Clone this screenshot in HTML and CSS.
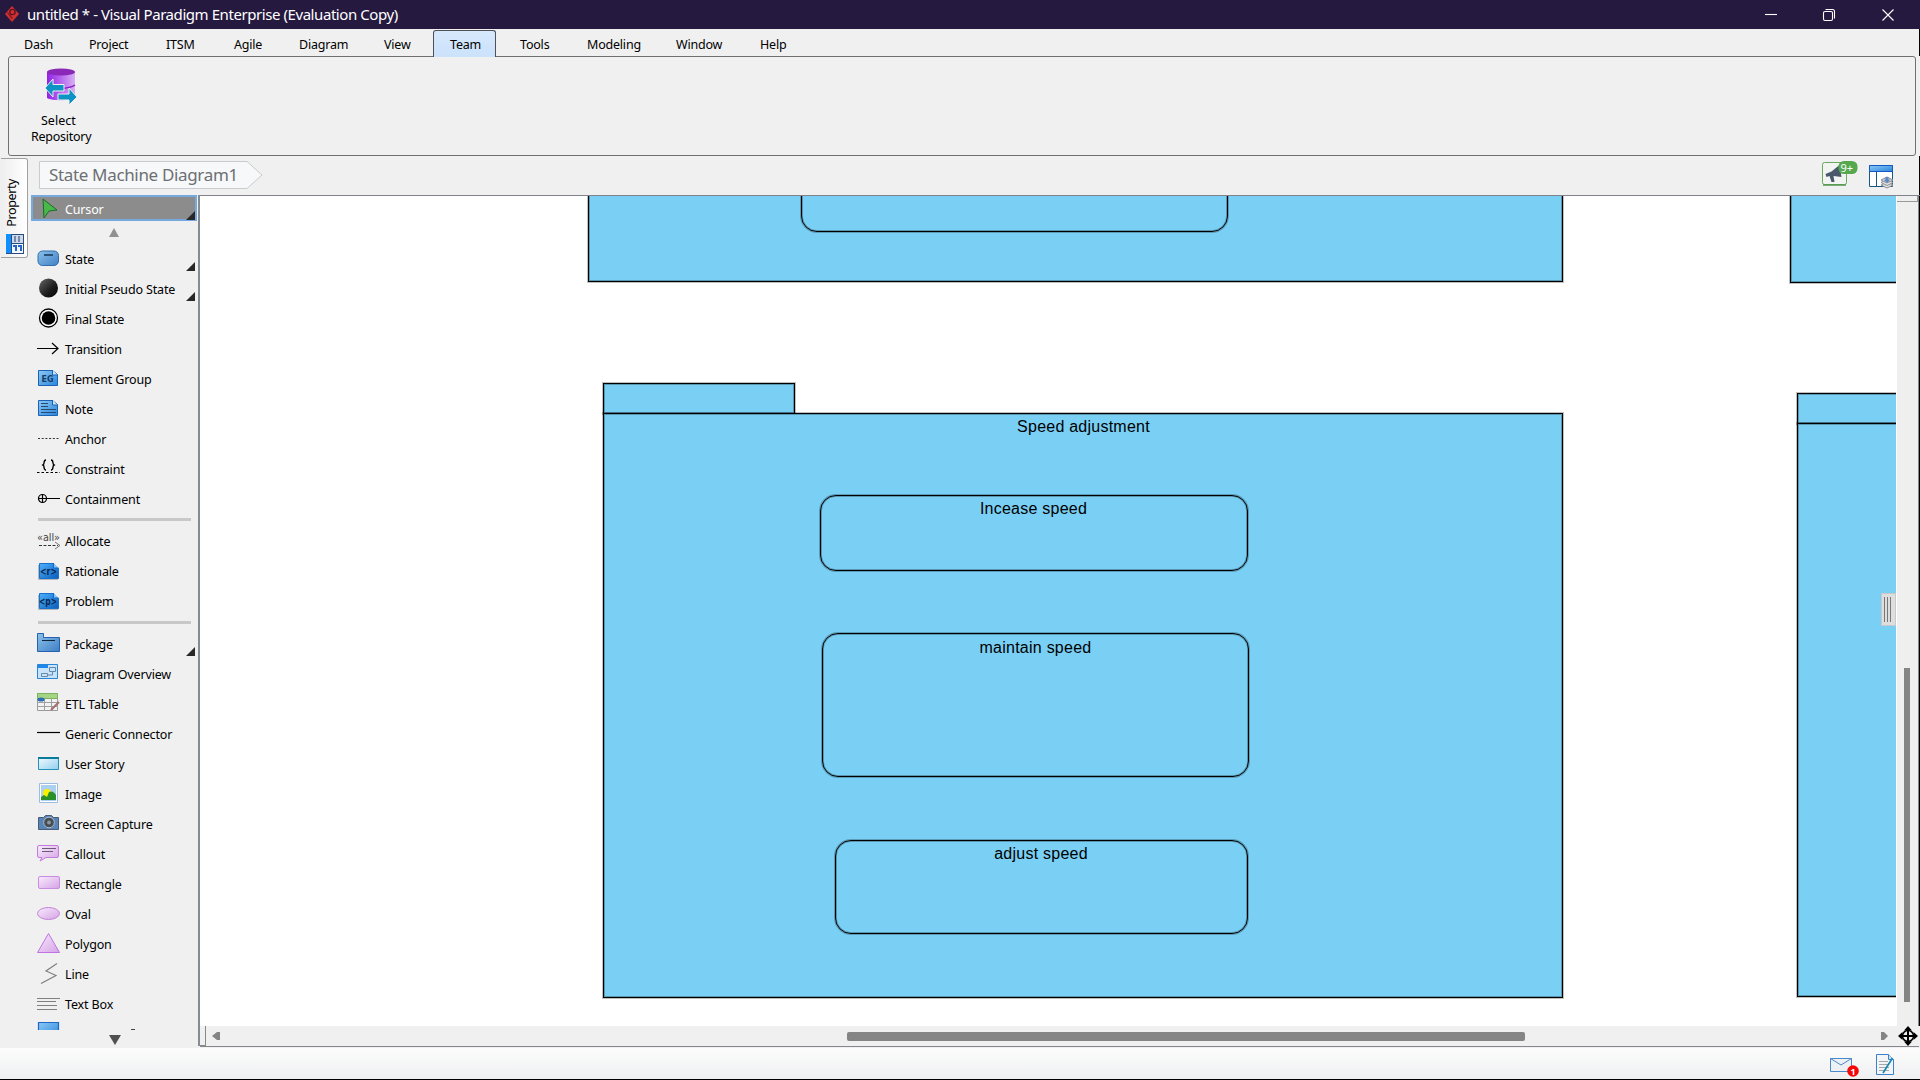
FILE: index.html
```html
<!DOCTYPE html>
<html lang="en">
<head>
<meta charset="utf-8">
<title>untitled * - Visual Paradigm Enterprise (Evaluation Copy)</title>
<link rel="stylesheet" href="styles.css">
</head>
<body>
<svg class="defs" width="0" height="0" aria-hidden="true">
  <defs>
    <linearGradient id="blue" x1="0" y1="0" x2="1" y2="1"><stop offset="0" stop-color="#8cc8f4"/><stop offset="1" stop-color="#2a86dc"/></linearGradient>
    <linearGradient id="steel" x1="0" y1="0" x2="1" y2="1"><stop offset="0" stop-color="#8cc2ea"/><stop offset="1" stop-color="#3f7fc4"/></linearGradient>
    <linearGradient id="deep" x1="0" y1="0" x2="1" y2="1"><stop offset="0" stop-color="#4cb0ff"/><stop offset="1" stop-color="#0a5cb8"/></linearGradient>
    <linearGradient id="pink" x1="0" y1="0" x2="1" y2="1"><stop offset="0" stop-color="#f8ecfc"/><stop offset="1" stop-color="#d6a2e6"/></linearGradient>
    <linearGradient id="pale" x1="0" y1="0" x2="1" y2="1"><stop offset="0" stop-color="#f2fafe"/><stop offset="1" stop-color="#8fd0f0"/></linearGradient>
    <linearGradient id="purple"><stop offset="0" stop-color="#9420e8"/><stop offset="1" stop-color="#d8b0f4"/></linearGradient>
    <linearGradient id="ball" x1="0" y1="0" x2="1" y2="1"><stop offset="0" stop-color="#666"/><stop offset=".6" stop-color="#1c1c1c"/><stop offset="1" stop-color="#000"/></linearGradient>
  </defs>
</svg>
<div class="window">
  <header class="titlebar">
    <svg class="logo" width="14" height="18" viewBox="0 0 14 18"><path d="M7 1l7 8-7 8-7-8z" fill="#d0312f"/><circle cx="7.500" cy="7" r="2.600" fill="none" stroke="#5d1426" stroke-width="1.400"/><path d="M2.500 7.500l3 4v-3M5.500 11.500l2 2" fill="none" stroke="#7a1a28" stroke-width="1.200"/></svg>
    <h1 class="title">untitled * - Visual Paradigm Enterprise (Evaluation Copy)</h1>
    <svg class="winbtns" width="136" height="28" viewBox="0 0 136 28" fill="none" stroke="#fff" stroke-width="1.100"><path d="M9 13.500h12"/><rect x="67.500" y="10.500" width="9" height="9" rx="1.500"/><path d="M69.500 8.500h7a2 2 0 0 1 2 2v7"/><path d="M126.500 8.500l11 11M137.500 8.500l-11 11"/></svg>
  </header>
  <nav class="menu">
    <span class="item dash">Dash</span><span class="item project">Project</span><span class="item itsm">ITSM</span><span class="item agile">Agile</span><span class="item diagram">Diagram</span><span class="item view">View</span><span class="item team">Team</span><span class="item tools">Tools</span><span class="item modeling">Modeling</span><span class="item windowm">Window</span><span class="item help">Help</span>
  </nav>
  <section class="ribbon">
    <button class="repo">
      <svg width="34" height="40" viewBox="0 0 34 40"><path d="M3 5v26c4 3 24 3 28 0V5z" fill="url(#purple)"/><ellipse cx="17" cy="5" rx="14" ry="3.500" fill="#8a28b8"/><path d="M3 20c5 3 22 2 28-2" fill="none" stroke="#8c1cc8" stroke-width="1.500"/><path d="M1 21l8-9v5.500h11v6.500H9v6z" fill="#0f93c4" stroke="#f0f0f0"/><path d="M33 30l-8 8v-5H14v-6h11v-6z" fill="#0f93c4" stroke="#f0f0f0"/></svg>
      <span class="repo-a">Select</span><span class="repo-b">Repository</span>
    </button>
  </section>
  <div class="body">
    <aside class="dock">
      <div class="proptab">
        <span class="vert">Property</span>
        <svg width="19" height="21" viewBox="0 0 19 21"><path d="M0 1h18v20H0z" fill="#2c4c7c"/><path d="M0 1h5v19H0z" fill="#1090ff"/><path d="M6 2h11v8H6z" fill="#cdd9ea"/><path d="M6 11h11v9H6z" fill="#f2f6fc"/><path d="M9 3v6m4-6v6" stroke="#7888a8" stroke-width="2"/><path d="M7 13h3v5m2-5h3v5" fill="none" stroke="#2464c4" stroke-width="2"/></svg>
      </div>
    </aside>
    <main class="main">
      <div class="crumbs">
        <div class="crumb">
          <svg width="224" height="28" viewBox="0 0 224 28"><path d="M.5.500h207.500l15 13.500-15 13.500H.5z" fill="#f7f8f9" stroke="#c9cbce"/></svg>
          <span class="crumb-text">State Machine Diagram1</span>
        </div>
        <div class="tools-r">
          <svg width="38" height="30" viewBox="0 -2 38 30"><rect x="1.500" y="1.500" width="24" height="22" rx="2" fill="#f2f4f2" stroke="#6aa860"/><path d="M2 24h23" stroke="#54984c" stroke-width="1.500"/><path d="M4.500 13l6-2.500 8-6.500 2 12-8-1 1 6h-3l-2-6-3 1z" fill="#4a586c"/><rect x="17.500" y="0" width="19" height="13" rx="5.500" fill="#56a84e"/><text x="19.500" y="10.500" class="badge">9+</text></svg>
          <svg width="28" height="30" viewBox="0 -2 28 30"><path d="M1.500 4.500h23v21h-23z" fill="#fff" stroke="#155a80"/><path d="M8.500 11v14" stroke="#155a80"/><path d="M1.500 4.500h23v6h-23z" fill="url(#blue)" stroke="#1458c8"/><g fill="#e4e4e6" stroke="#8a8c90"><path d="M13 24l6-3 6 3-6 3z"/><path d="M13 21.500l6-3 6 3-6 3z"/><path d="M13 19l6-3 6 3-6 3z"/></g><path d="M17.500 16h3v2.500h2L19 22l-3.500-3.500h2z" fill="#5d88c8"/></svg>
        </div>
      </div>
      <div class="work">
        <div class="palette">
          <div class="row cursor"><svg class="ic" viewBox="0 0 24 24"><path d="M6 3l14 11-8 1-5 7z" fill="#48b848" stroke="#1e6a2c"/></svg><span>Cursor</span><i class="corner"></i></div>
          <div class="scroll-up"><svg width="10" height="9"><path d="M5 0l5 9H0z" fill="#909090"/></svg></div>
          <div class="row"><svg class="ic" viewBox="0 0 24 24"><rect x="1" y="4" width="20.500" height="14.500" rx="4.500" fill="url(#steel)" stroke="#2e6eae"/><path d="M7 8h9" stroke="#24486c" stroke-width="1.800"/></svg><span>State</span><i class="corner"></i></div>
          <div class="row"><svg class="ic" viewBox="0 0 24 24"><circle cx="11.500" cy="11" r="9.500" fill="url(#ball)"/></svg><span>Initial Pseudo State</span><i class="corner"></i></div>
          <div class="row"><svg class="ic" viewBox="0 0 24 24"><circle cx="11.500" cy="11" r="9" fill="#fff" stroke="#000" stroke-width="1.300"/><circle cx="11.500" cy="11" r="6.800"/></svg><span>Final State</span></div>
          <div class="row"><svg class="ic" viewBox="0 0 24 24" fill="none" stroke="#000" stroke-width="1.200"><path d="M0 11.500h21M15 6l6 5.500-6 5.500"/></svg><span>Transition</span></div>
          <div class="row"><svg class="ic" viewBox="0 0 24 24"><path d="M1.500 3.500h14l5 4v11h-19z" fill="url(#blue)" stroke="#1a62b4"/><path d="M15.500 3v5h5" fill="#cfe6fa" stroke="#1a62b4"/><text x="4.500" y="15" class="eg">EG</text></svg><span>Element Group</span></div>
          <div class="row"><svg class="ic" viewBox="0 0 24 24"><path d="M1.500 3.500h14l5 4v11h-19z" fill="url(#blue)" stroke="#1a62b4"/><path d="M15.500 3v5h5" fill="#cfe6fa" stroke="#1a62b4"/><path d="M4 6.500h7M4 9.500h7M4 12.500h15M4 15.500h15" stroke="#244a74"/></svg><span>Note</span></div>
          <div class="row"><svg class="ic" viewBox="0 0 24 24"><path d="M1 11.500h21" stroke="#333" stroke-dasharray="2 1.700"/></svg><span>Anchor</span></div>
          <div class="row"><svg class="ic" viewBox="0 0 24 24" fill="none" stroke="#000"><path d="M0 15.500h23" stroke-dasharray="2.500 2"/><path d="M9 3c-3 0-1 4-3 5 2 1 0 5 3 5M14 3c3 0 1 4 3 5-2 1 0 5-3 5" stroke-width="1.400"/></svg><span>Constraint</span></div>
          <div class="row"><svg class="ic" viewBox="0 0 24 24" fill="none" stroke="#000" stroke-width="1.200"><circle cx="5.500" cy="11.500" r="4"/><path d="M1 11.500h22M5.500 7v9"/></svg><span>Containment</span></div>
          <hr class="sep">
          <div class="row"><svg class="ic" viewBox="0 0 24 24"><text x="0" y="11" class="alloc" textLength="23" lengthAdjust="spacingAndGlyphs">«all»</text><path d="M2 15.500h19" fill="none" stroke="#333" stroke-dasharray="3 1.500"/><path d="M18 12l5 3.500-5 3.500" fill="none" stroke="#777"/></svg><span>Allocate</span></div>
          <div class="row"><svg class="ic" viewBox="0 0 24 24"><path d="M2.500 3.500h14l5 5v10h-19z" fill="url(#deep)" stroke="#1670cc"/><path d="M1.500 5v14.500H21" fill="none" stroke="#b8b8b8"/><path d="M16.500 3v5h5" fill="#8cc8fa" stroke="#1068c8"/><text x="3" y="14.500" class="tag" textLength="17" lengthAdjust="spacingAndGlyphs">&lt;r&gt;</text></svg><span>Rationale</span></div>
          <div class="row"><svg class="ic" viewBox="0 0 24 24"><path d="M2.500 3.500h14l5 5v10h-19z" fill="url(#deep)" stroke="#1670cc"/><path d="M1.500 5v14.500H21" fill="none" stroke="#b8b8b8"/><path d="M16.500 3v5h5" fill="#8cc8fa" stroke="#1068c8"/><text x="2" y="14.500" class="tag" textLength="18" lengthAdjust="spacingAndGlyphs">&lt;p&gt;</text></svg><span>Problem</span></div>
          <hr class="sep sep-b">
          <div class="row"><svg class="ic" viewBox="0 0 24 24"><path d="M.5 .5h6v4h16v14H.5z" fill="url(#steel)" stroke="#2462b0"/><path d="M5 7.500h13" stroke="#10243c"/></svg><span>Package</span><i class="corner"></i></div>
          <div class="row"><svg class="ic" viewBox="0 0 24 24"><path d="M.5 1.500h20v14H.5z" fill="#c8e4fa" stroke="#2a84d8"/><path d="M1 2h10v3H1z" fill="#1c88ec"/><path d="M12.500 4.500h6v4h-6zM4.500 10.500h6v3h-6zM10.500 12h5V8.500" fill="none" stroke="#6888a8"/></svg><span>Diagram Overview</span></div>
          <div class="row"><svg class="ic" viewBox="0 0 24 24"><path d="M.5 .5h20v17H.5z" fill="#f2f2f2" stroke="#9a9a9a"/><path d="M.5 .5h20v5H.5z" fill="#a4d484" stroke="#7cb45c"/><path d="M0 9.500h21M0 13.500h21M7.500 6v12M14.500 6v12" stroke="#a0a0a0"/><ellipse cx="4" cy="6.500" rx="3.500" ry="2" fill="#2c6cb0"/><path d="M14 17l8-8" stroke="#a46e6e" stroke-width="2"/></svg><span>ETL Table</span></div>
          <div class="row"><svg class="ic" viewBox="0 0 24 24"><path d="M0 9.500h23" stroke="#000" stroke-width="1.200"/></svg><span>Generic Connector</span></div>
          <div class="row"><svg class="ic" viewBox="0 0 24 24"><path d="M1.500 4.500h20v12h-20z" fill="url(#pale)" stroke="#2690b8"/><path d="M1 4h21v2H1z" fill="#087c98"/></svg><span>User Story</span></div>
          <div class="row"><svg class="ic" viewBox="0 0 24 24"><path d="M2.500 .5h18v19h-18z" fill="#fff" stroke="#9cbce0"/><path d="M4 2h15v16H4z" fill="#acd0f0"/><circle cx="10" cy="10" r="4" fill="#f8f000"/><path d="M4 17v-3l3-2 3 2 2-5q4-2 7 3v5z" fill="#2a9028"/></svg><span>Image</span></div>
          <div class="row"><svg class="ic" viewBox="0 0 24 24"><path d="M1.500 4.500h5l2-2h6l2 2h5v12h-20z" fill="#5884b8" stroke="#465c74"/><circle cx="12" cy="9.500" r="5.300" fill="#444c54" stroke="#b4bcc4"/><circle cx="12" cy="9.500" r="2" fill="#8c949c"/></svg><span>Screen Capture</span></div>
          <div class="row"><svg class="ic" viewBox="0 0 24 24"><path d="M2 2.500h18q1.500 0 1.500 1.500v9q0 1.500-1.500 1.500H9L3 18l2-3.500H2q-1.500 0-1.500-1.500V4q0-1.500 1.500-1.500z" fill="url(#pink)" stroke="#c47cdc"/><path d="M5 5.500h14M5 8.500h11" stroke="#6c5c74"/></svg><span>Callout</span></div>
          <div class="row"><svg class="ic" viewBox="0 0 24 24"><rect x="1.500" y="3.500" width="21" height="12" rx="1.500" fill="url(#pink)" stroke="#c88ce0"/></svg><span>Rectangle</span></div>
          <div class="row"><svg class="ic" viewBox="0 0 24 24"><ellipse cx="11.500" cy="10.500" rx="11" ry="6" fill="url(#pink)" stroke="#c084d8"/></svg><span>Oval</span></div>
          <div class="row"><svg class="ic" viewBox="0 0 24 24"><path d="M11.500 .5l11 19H.5z" fill="url(#pink)" stroke="#bd74e0"/></svg><span>Polygon</span></div>
          <div class="row"><svg class="ic" viewBox="0 0 24 24"><path d="M20 .5L9 8l10 4.500L4 20.500" fill="none" stroke="#808080" stroke-width="1.200"/></svg><span>Line</span></div>
          <div class="row"><svg class="ic" viewBox="0 0 24 24"><path d="M0 5.500h23M0 8.500h19M0 12.500h20M0 16.500h20" stroke="#808080"/></svg><span>Text Box</span></div>
          <div class="row cut"><svg class="ic" viewBox="0 0 24 24"><path d="M1.500 1.500h20v16h-20z" fill="url(#blue)" stroke="#2068c8" stroke-width="1.200"/></svg><i class="sliver"></i></div>
          <div class="scroll-down"><svg width="12" height="10"><path d="M0 0h12L6 10z" fill="#505050"/></svg></div>
        </div>
        <div class="canvas-col">
          <div class="canvas-row">
            <div class="canvas">
              <div class="shape p1"></div><div class="state s0"></div>
              <div class="shape p2"></div>
              <div class="shape tab t3"></div><div class="shape p3"><span class="ptitle">Speed adjustment</span></div>
              <div class="state s1"><span>Incease speed</span></div>
              <div class="state s2"><span>maintain speed</span></div>
              <div class="state s3"><span>adjust speed</span></div>
              <div class="shape tab t4"></div><div class="shape p4"></div>
              <div class="grip"><i></i><i></i><i></i></div>
            </div>
            <div class="vscroll"><div class="vcap"></div><div class="vthumb"></div></div>
          </div>
          <div class="hscroll">
            <div class="hcap"></div>
            <svg class="arr-l" width="9" height="10"><path d="M0 5l5-4h3v8H5z" fill="#848484"/></svg>
            <div class="hthumb"></div>
            <svg class="arr-r" width="9" height="10"><path d="M8 5L4 1H1v8h3z" fill="#848484"/></svg>
            <svg class="move" width="20" height="20" viewBox="0 0 20 20"><path d="M10 0l4 4.500H11V9h4.500V6l4.500 4-4.500 4v-3H11v4.500h3L10 20l-4-4.500h3V11H4.500v3L0 10l4.500-4v3H9V4.500H6z"/><circle cx="10" cy="10" r="5.500" fill="none" stroke="#000" stroke-width="1.500"/></svg>
          </div>
        </div>
      </div>
    </main>
  </div>
  <footer class="status">
    <svg width="30" height="24" viewBox="0 0 30 24"><path d="M.5 3.500h21v13H.5z" fill="#eef1f4" stroke="#4a88cc"/><path d="M.5 3.500l10.500 6.500 10.500-6.500" fill="none" stroke="#4a88cc"/><circle cx="23" cy="16" r="5.800" fill="#f40808"/><text x="20.500" y="19.500" class="one">1</text></svg>
    <svg width="20" height="24" viewBox="0 1 20 24"><path d="M.5 .5h12l5 5v15H.5z" fill="#f2f4f6" stroke="#3c80cc"/><path d="M12.500 .5v5h5" fill="#cfe2f6" stroke="#3c80cc"/><path d="M3 7.500h9M3 10.500h10M3 13.500h10M3 16.500h10" stroke="#a4a8ac"/><path d="M7 19L16.500 4" stroke="#1c88b0" stroke-width="1.700"/></svg>
  </footer>
</div>
</body>
</html>
```
FILE: styles.css
```css
* { box-sizing: border-box; }
body { margin: 0; background: #000; font-family: "Noto Sans", sans-serif; color: #000; }
.defs { position: absolute; }
.window { width: 1920px; height: 1080px; display: flex; flex-direction: column; overflow: hidden; border-bottom: 1px solid #000; background: #f0f0f0; }
.titlebar { height: 29px; flex: none; background: #25193f; display: flex; align-items: center; padding: 0 20px 0 5px; }
.logo { margin-top: -1px; }
.title { margin: 0 auto 0 8px; color: #fff; font: 400 15px/29px "Noto Sans", sans-serif; letter-spacing: -0.43px; white-space: pre; }
.winbtns { margin-right: 8px; overflow: visible; }
.menu { height: 27px; flex: none; display: flex; padding-top: 1px; border-right: 1px solid #000; font-size: 12.500px; letter-spacing: -0.2px; line-height: 29px; position: relative; z-index: 1; }
.item { white-space: pre; height: 27px; flex: none; }
.dash { width: 65px; margin-left: 24px; }
.project { width: 77px; }
.itsm { width: 68px; }
.agile { width: 65px; }
.diagram { width: 85px; }
.view { width: 49px; }
.team { width: 63px; padding-left: 16px; border: 1px solid #505058; border-bottom: 0; border-radius: 3px 3px 0 0; background: linear-gradient(#d6e8fc, #cbe2fb); line-height: 27px; }
.tools { width: 67px; margin-left: 24px; }
.modeling { width: 89px; }
.windowm { width: 84px; }
.ribbon { height: 100px; flex: none; margin: 0 4px 0 8px; border: 1px solid #707070; border-radius: 3px; }
.repo { all: unset; display: flex; flex-direction: column; width: 90px; padding: 10px 0 0 21px; font: 12.500px/16px "Noto Sans", sans-serif; letter-spacing: -0.25px; }
.repo svg { margin-left: 14px; }
.repo-a { margin: 6px 0 0 11px; letter-spacing: 0; }
.repo-b { margin-left: 1px; white-space: pre; }
.body { display: flex; flex: none; height: 892px; }
.dock { width: 31px; padding-top: 2px; }
.proptab { width: 27px; height: 100px; margin-left: 1px; border: 1px solid #a0a0a0; border-left: 0; border-radius: 0 3px 3px 0; background: linear-gradient(90deg, #eee, #fff); display: flex; flex-direction: column; align-items: center; justify-content: flex-end; gap: 6px; padding: 0 2px 3px 5px; }
.vert { writing-mode: vertical-rl; transform: rotate(180deg); margin-right: 8px; font: 12.500px/18px "Noto Sans", sans-serif; letter-spacing: -0.4px; }
.main { flex: 1; display: flex; flex-direction: column; min-width: 0; }
.crumbs { height: 39px; flex: none; display: flex; justify-content: space-between; padding: 5px 23px 0 8px; border-right: 1px solid #000; }
.crumb { display: grid; height: 28px; }
.crumb > * { grid-area: 1 / 1; }
.crumb-text { padding-left: 10px; font: 17px/28px "Noto Sans", sans-serif; letter-spacing: -0.34px; color: #6c6f73; white-space: pre; }
.tools-r { display: flex; gap: 9px; margin-top: -2px; }
.tools-r svg { flex: none; }
.badge { font: 11px "Noto Sans", sans-serif; fill: #fff; }
.work { flex: 1; display: flex; min-height: 0; }
.palette { width: 169px; flex: none; border-right: 2px solid #868a94; height: 851px; font-size: 12.500px; letter-spacing: -0.15px; overflow: hidden; }
.row { height: 30px; display: flex; align-items: center; padding-left: 6px; position: relative; white-space: pre; }
.ic { width: 24px; height: 24px; flex: none; margin: 2px 4px 0 0; overflow: visible; }
.sep ~ .row .ic { margin-top: 4px; }
.row span { margin-top: 2px; }
.corner { position: absolute; right: 3px; bottom: 2px; width: 9px; height: 9px; background: #282828; clip-path: polygon(100% 0, 100% 100%, 0 100%); }
.cursor { height: 26px; width: 166px; background: #8c8c8c; border: 2px solid #76a9e0; color: #fff; padding-left: 4px; }
.cursor .ic { margin-top: 0; }
.cursor .corner { right: 0; bottom: -1px; }
.scroll-up { height: 22px; padding: 7px 0 0 78px; line-height: 0; }
.sep { height: 3px; margin: 5px 7px 4px 7px; border: 0; background: #c8c8c8; }
.sep-b { margin: 6px 7px 4px 7px; }
.cut { height: 12px; align-items: flex-start; overflow: hidden; }
.sep ~ .cut .ic { margin-top: 3px; }
.sliver { width: 4px; height: 1px; background: #444; margin: 11px 0 0 66px; }
.scroll-down { padding: 5px 0 0 78px; line-height: 0; }
.eg { font: 700 8px "DejaVu Sans", sans-serif; fill: #163c66; letter-spacing: 0; }
.alloc { font: 10px "DejaVu Sans", sans-serif; fill: #444; letter-spacing: 0; }
.tag { font: 700 10px "DejaVu Sans", sans-serif; fill: #082850; letter-spacing: 0; }
.canvas-col { flex: 1; display: flex; flex-direction: column; min-width: 0; }
.canvas-row { display: flex; height: 831px; border-top: 1px solid #808488; }
.canvas { position: relative; width: 1696px; background: #fff; overflow: hidden; flex: none; }
.shape, .state { position: absolute; border: 1px solid #000; background: #7acff5; box-shadow: 0 0 0 1px rgba(0, 0, 0, .25), inset 0 0 0 1px rgba(0, 0, 0, .28); font: 16px/20px "Liberation Sans", Arial, sans-serif; letter-spacing: .24px; text-align: center; white-space: pre; }
.state { border-radius: 16px; }
.p1 { left: 388px; top: -10px; width: 975px; height: 96px; }
.s0 { left: 601px; top: -30px; width: 427px; height: 66px; }
.p2 { left: 1590px; top: -10px; width: 200px; height: 97px; }
.t3 { left: 403px; top: 187px; width: 192px; height: 31px; }
.p3 { left: 403px; top: 217px; width: 960px; height: 585px; }
.p3 .ptitle { display: block; padding: 3px 0 0 1px; }
.state span { display: block; padding-top: 3px; }
.s1 { left: 620px; top: 299px; width: 428px; height: 76px; }
.s2 { left: 622px; top: 437px; width: 427px; height: 144px; }
.s2 span { padding-top: 4px; }
.s3 { left: 635px; top: 644px; width: 413px; height: 94px; }
.s3 span, .s1 span { padding-right: 1px; }
.t4 { left: 1597px; top: 197px; width: 192px; height: 31px; }
.p4 { left: 1597px; top: 227px; width: 200px; height: 574px; }
.grip { position: absolute; left: 1681px; top: 397px; width: 15px; height: 33px; background: #dedede; border: 1px solid #c8c8c8; display: flex; gap: 2px; padding: 3px 0 3px 2px; }
.grip i { width: 1px; background: #787878; }
.vscroll { flex: 1; border-left: 1px solid #fff; border-right: 1px solid #000; background: #efefef; box-shadow: inset -1px 0 #84888c; }
.vcap { height: 6px; margin-right: 1px; border: 1px solid #999; border-top: 0; border-left: 0; }
.vthumb { width: 6px; height: 334px; margin: 466px 0 0 7px; background: #858585; }
.hscroll { display: flex; height: 21px; align-items: center; border-bottom: 1px solid #84888c; margin-right: 1px; flex: none; }
.hcap { width: 6px; height: 20px; border: 1px solid #888; border-left: 0; border-top: 0; }
.arr-l { margin-left: 6px; }
.hthumb { width: 678px; height: 9px; border-radius: 2px; margin-left: 626px; background: #858585; }
.arr-r { margin-left: 355px; }
.move { margin-left: 9px; }
.status { flex: 1; background: linear-gradient(#fcfcfc, #eff0f2); display: flex; justify-content: flex-end; align-items: flex-start; gap: 16px; padding: 7px 24px 0 0; }
.status svg { overflow: visible; }
.one { font: 700 9px "Noto Sans", sans-serif; fill: #fff; }
```
